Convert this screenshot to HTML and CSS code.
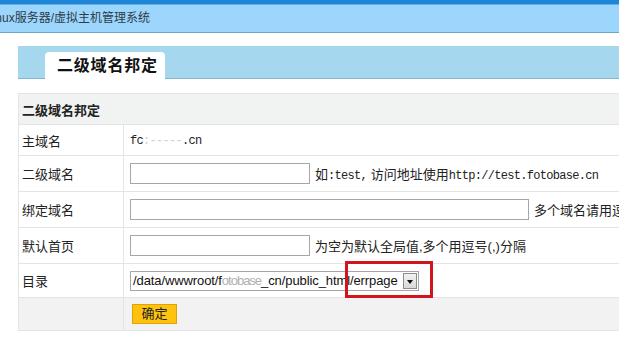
FILE: index.html
```html
<!DOCTYPE html>
<html lang="zh-CN">
<head>
<meta charset="utf-8">
<title>二级域名邦定</title>
<link rel="stylesheet" href="styles.css">
</head>
<body>
<div class="topbar">
  <div class="crumb">Linux服务器/虚拟主机管理系统</div>
</div>
<div class="tabs">
  <div class="tab">二级域名邦定</div>
</div>
<table class="form">
  <tr class="head"><th colspan="2">二级域名邦定</th></tr>
  <tr class="r31"><td class="lab">主域名</td><td><span class="mono">fc<span class="redact">:-----</span>.cn</span></td></tr>
  <tr class="r36"><td class="lab">二级域名</td><td><span class="inp short"></span><span class="hint">如<span class="mono">:test,</span> 访问地址使用<span class="mono">http://test.fotobase.cn</span></span></td></tr>
  <tr class="r36"><td class="lab">绑定域名</td><td><span class="inp long"></span><span class="hint">多个域名请用逗号分隔</span></td></tr>
  <tr class="r36"><td class="lab">默认首页</td><td><span class="inp short"></span><span class="hint">为空为默认全局值,多个用逗号(,)分隔</span></td></tr>
  <tr class="r34"><td class="lab">目录</td><td>
    <div class="selwrap">
      <div class="sel"><span class="seltext">/data/wwwroot/f<span class="redact2">otobase</span>_cn/public_html/errpage</span><span class="arrow"></span></div>
      <div class="mark"></div>
    </div>
  </td></tr>
  <tr class="foot"><td></td><td><span class="btn">确定</span></td></tr>
</table>
</body>
</html>
```
FILE: styles.css
```css
html, body {
  margin: 0;
  padding: 0;
  overflow: hidden;
  background: #fff;
}
body {
  width: 619px;
  height: 347px;
  font-family: "Liberation Sans", "Noto Sans CJK SC", sans-serif;
  font-size: 13px;
  color: #222;
}
.topbar {
  border-top: 4px solid #1f86d7;
  box-shadow: inset 0 1px 0 #5fb3ea;
  background: #9dd6fc;
  height: 28px;
  border-bottom: 1px solid #6fa6bf;
  overflow: hidden;
}
.crumb {
  margin-left: -14px;
  line-height: 28px;
  font-size: 12px;
  color: #2b3b48;
  white-space: nowrap;
}
.tabs {
  margin: 13px 0 0 18px;
  height: 32px;
  background: #a5d8ee;
  border-bottom: 1px solid #86b6ca;
  display: flex;
  align-items: flex-end;
  padding-left: 27px;
  width: 800px;
}
.tab {
  background: #fff;
  width: 120px;
  height: 27px;
  border-radius: 4px 4px 0 0;
  margin-bottom: -1px;
  box-sizing: border-box;
  padding-left: 12px;
  font-size: 16px;
  font-weight: bold;
  letter-spacing: 0.8px;
  line-height: 27px;
  color: #111;
}
.form {
  margin: 14px 0 0 18px;
  border-collapse: collapse;
  width: 800px;
}
.form th, .form td {
  border: 1px solid #e4e4e4;
  padding: 0 0 0 6px;
  text-align: left;
  vertical-align: middle;
  white-space: nowrap;
}
.form .head th {
  height: 30px;
  background: #f1f2f2;
  font-weight: bold;
  padding-left: 3px;
  font-size: 13px;
}
.form td.lab {
  width: 101px;
  padding-left: 3px;
  color: #222;
}
.r31 td { height: 30px; }
.r36 td { height: 35px; }
.r34 td { height: 33px; }
.foot td { height: 32px; background: #f2f2f2; }
.mono {
  font-family: "Liberation Mono", monospace;
  font-size: 12px;
  letter-spacing: -0.7px;
}
.redact { color: #d0d0d0; }
.redact2 { color: #b0b0b0; letter-spacing: -1px; }
.inp {
  display: inline-block;
  vertical-align: middle;
  height: 19px;
  border: 1px solid #a6a6a6;
  background: #fff;
}
.inp.short { width: 178px; }
.inp.long { width: 397px; }
.hint {
  display: inline-block;
  vertical-align: middle;
  margin-left: 5px;
}
.selwrap {
  position: relative;
  width: 289px;
  height: 20px;
}
.sel {
  box-sizing: border-box;
  width: 289px;
  height: 20px;
  border: 1px solid #a6a6a6;
  display: flex;
  align-items: center;
  justify-content: space-between;
  padding: 0 1px 0 2px;
}
.seltext {
  font-size: 13px;
  letter-spacing: -0.1px;
  color: #111;
}
.arrow {
  width: 14px;
  height: 16px;
  box-sizing: border-box;
  border: 1px solid #8c8c8c;
  background: linear-gradient(#f2f2f2, #d8d8d8);
  position: relative;
}
.arrow::after {
  content: "";
  position: absolute;
  left: 3px;
  top: 6px;
  border-left: 3.5px solid transparent;
  border-right: 3.5px solid transparent;
  border-top: 4px solid #111;
}
.mark {
  position: absolute;
  left: 215px;
  top: -10px;
  width: 88px;
  height: 37px;
  box-sizing: border-box;
  border: 3px solid #d2141c;
}
.btn {
  display: inline-block;
  margin-left: 2px;
  width: 45px;
  height: 20px;
  box-sizing: border-box;
  background: #ffc30f;
  border: 1px solid #e0a300;
  text-align: center;
  line-height: 18px;
  font-size: 13px;
  color: #222;
}
```
